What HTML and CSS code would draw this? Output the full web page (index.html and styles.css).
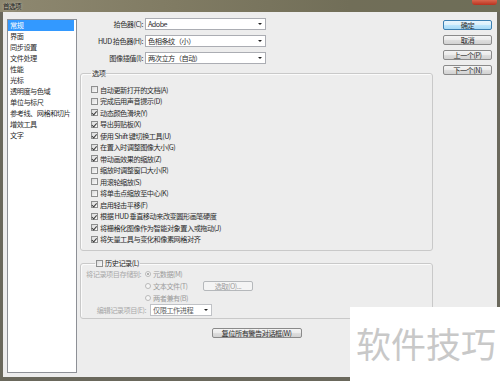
FILE: index.html
```html
<!DOCTYPE html>
<html lang="zh-CN">

<head>
    <meta charset="UTF-8">
    <meta name="viewport" content="width=device-width, initial-scale=1.0">
    <title>首选项</title>
    <link rel="stylesheet" href="styles.css">
</head>

<body>

    <div class="window">
        <div class="titlebar">
            <span class="title">首选项</span>
            <span class="close"></span>
        </div>

        <div class="client">
            <ul class="cats">
                <li class="sel">常规</li>
                <li>界面</li>
                <li>同步设置</li>
                <li>文件处理</li>
                <li>性能</li>
                <li>光标</li>
                <li>透明度与色域</li>
                <li>单位与标尺</li>
                <li>参考线、网格和切片</li>
                <li>增效工具</li>
                <li>文字</li>
            </ul>

            <div class="main">
                <div class="pickers">
                    <div class="pick-row">
                        <label>拾色器(C):</label>
                        <div class="combo">Adobe</div>
                    </div>
                    <div class="pick-row">
                        <label>HUD 拾色器(H):</label>
                        <div class="combo">色相条纹（小）</div>
                    </div>
                    <div class="pick-row">
                        <label>图像插值(I):</label>
                        <div class="combo">两次立方（自动）</div>
                    </div>
                </div>

                <fieldset class="group options">
                    <legend>选项</legend>
                    <div class="chk"><span class="box"></span>自动更新打开的文档(A)</div>
                    <div class="chk"><span class="box"></span>完成后用声音提示(D)</div>
                    <div class="chk on"><span class="box"></span>动态颜色滑块(Y)</div>
                    <div class="chk on"><span class="box"></span>导出剪贴板(X)</div>
                    <div class="chk on"><span class="box"></span>使用 Shift 键切换工具(U)</div>
                    <div class="chk on"><span class="box"></span>在置入时调整图像大小(G)</div>
                    <div class="chk on"><span class="box"></span>带动画效果的缩放(Z)</div>
                    <div class="chk"><span class="box"></span>缩放时调整窗口大小(R)</div>
                    <div class="chk"><span class="box"></span>用滚轮缩放(S)</div>
                    <div class="chk"><span class="box"></span>将单击点缩放至中心(K)</div>
                    <div class="chk on"><span class="box"></span>启用轻击平移(F)</div>
                    <div class="chk on"><span class="box"></span>根据 HUD 垂直移动来改变圆形画笔硬度</div>
                    <div class="chk on"><span class="box"></span>将栅格化图像作为智能对象置入或拖动(J)</div>
                    <div class="chk on"><span class="box"></span>将矢量工具与变化和像素网格对齐</div>
                </fieldset>

                <fieldset class="group history">
                    <legend><span class="box"></span>历史记录(L)</legend>
                    <div class="hrow">
                        <span class="hlabel">将记录项目存储到:</span>
                        <span class="radio on"></span><span class="dim">元数据(M)</span>
                    </div>
                    <div class="hrow indent">
                        <span class="radio-item"><span class="radio"></span><span class="dim">文本文件(T)</span></span>
                        <span class="btn small disabled">选取(O)...</span>
                    </div>
                    <div class="hrow indent">
                        <span class="radio"></span><span class="dim">两者兼有(B)</span>
                    </div>
                    <div class="hrow">
                        <span class="hlabel wide">编辑记录项目(E):</span>
                        <div class="combo short">仅限工作进程</div>
                    </div>
                </fieldset>

                <div class="reset-row">
                    <span class="btn reset">复位所有警告对话框(W)</span>
                </div>
            </div>

            <div class="actions">
                <span class="btn default">确定</span>
                <span class="btn">取消</span>
                <span class="btn">上一个(P)</span>
                <span class="btn">下一个(N)</span>
            </div>
        </div>

        <div class="watermark">软件技巧</div>
    </div>

</body>

</html>
```

FILE: styles.css
```css
body {
    margin: 0;
    width: 500px;
    height: 381px;
    overflow: hidden;
    background-color: #6a685c;
    font-family: "Noto Sans CJK SC", "Noto Sans", sans-serif;
    font-size: 7.2px;
    letter-spacing: -0.5px;
    color: #2b2b2b;
}

.window {
    position: relative;
    height: 381px;
    display: flex;
    flex-direction: column;
}

.titlebar {
    position: relative;
    height: 12px;
    flex: none;
    display: flex;
    align-items: center;
    padding-left: 3px;
    background: linear-gradient(to right, #8e8870, #807b63 35%, #716e58 70%, #6e6e58);
}

.title {
    color: #1c1c1c;
    font-size: 6.5px;
    text-shadow: 0 0 3px rgba(255, 255, 255, 0.6);
}

.close {
    position: absolute;
    top: 0;
    right: 3px;
    width: 25px;
    height: 5px;
    border-radius: 0 0 3px 3px;
    background: linear-gradient(#d9664e, #b8321f);
}

.client {
    flex: 1;
    margin: 0 3px 4px 3px;
    padding: 6px 5px 0 4px;
    background-color: #ededed;
    display: flex;
}

/* category list */

.cats {
    list-style: none;
    margin: 1px 0 0 0;
    padding: 0;
    width: 70px;
    height: 354px;
    box-sizing: border-box;
    border: 1px solid #8d9096;
    background-color: #fff;
}

.cats li {
    height: 11px;
    line-height: 11px;
    padding-left: 2px;
    margin-right: 2px;
}

.cats li.sel {
    background-color: #3399ff;
    color: #fff;
}

/* main column */

.main {
    width: 353px;
    margin-left: 3px;
}

.pickers {
    display: flex;
    flex-direction: column;
    gap: 5px;
}

.pick-row {
    display: flex;
    height: 12px;
    line-height: 12px;
}

.pick-row label {
    width: 63px;
    margin-right: 2px;
    text-align: right;
}

.combo {
    position: relative;
    width: 121px;
    height: 12px;
    box-sizing: border-box;
    border: 1px solid #abadb3;
    background-color: #fff;
    padding-left: 2px;
    line-height: 10px;
}

.combo::after {
    content: "";
    position: absolute;
    right: 3px;
    top: 4px;
    border-left: 2px solid transparent;
    border-right: 2px solid transparent;
    border-top: 2.5px solid #222;
}

.combo.short {
    width: 62px;
    color: #5c5c5c;
    border-color: #c0c2c6;
}

.group {
    margin: 0;
    border: 1px solid #c9c9c9;
    border-radius: 3px;
    box-shadow: inset 1px 1px 0 #fbfbfb;
    min-inline-size: 0;
}

.group legend {
    padding: 0 1px;
    line-height: 10px;
}

.options {
    margin-top: 4px;
    padding: 6px 0 5px 10px;
}

.chk {
    display: flex;
    align-items: center;
    height: 11.5px;
}

.box {
    display: inline-flex;
    align-items: center;
    justify-content: center;
    width: 7px;
    height: 7px;
    box-sizing: border-box;
    margin-right: 2px;
    border: 1px solid #8e8f8f;
    background: linear-gradient(135deg, #dadada, #fbfbfb);
}

.chk.on .box::after {
    content: "";
    width: 1.5px;
    height: 3.5px;
    margin-top: -1px;
    border: solid #3a3a3a;
    border-width: 0 1px 1px 0;
    transform: rotate(40deg);
}

/* history group */

.history {
    margin-top: 7px;
    padding: 0 0 2px 0;
}

.history legend {
    display: flex;
    align-items: center;
    margin-left: 14px;
    color: #1f1f1f;
}

.hrow {
    display: flex;
    align-items: center;
    height: 12px;
}

.hrow.indent {
    padding-left: 64px;
}

.hlabel {
    width: 60px;
    margin-right: 4px;
    text-align: right;
    color: #a8a8a8;
}

.hlabel.wide {
    width: 65px;
}

.dim {
    color: #9c9c9c;
}

.radio-item {
    display: flex;
    align-items: center;
    width: 58px;
}

.radio {
    display: inline-flex;
    align-items: center;
    justify-content: center;
    width: 6px;
    height: 6px;
    box-sizing: border-box;
    margin-right: 2px;
    border: 1px solid #b9b9b9;
    border-radius: 50%;
    background-color: #f6f6f6;
}

.radio.on::after {
    content: "";
    width: 2px;
    height: 2px;
    border-radius: 50%;
    background-color: #9a9a9a;
}

/* buttons */

.btn {
    display: block;
    height: 10px;
    box-sizing: border-box;
    border: 1px solid #8a8a8a;
    border-radius: 2px;
    background: linear-gradient(#f4f4f4, #ebebeb 50%, #dedede 51%, #d2d2d2);
    line-height: 8px;
    text-align: center;
    color: #2b2b2b;
}

.btn.default {
    border-color: #3c7fb1;
    background: linear-gradient(#eaf6fd, #d9f0fc 50%, #bee6fd 51%, #a7d9f5);
}

.btn.small {
    width: 50px;
}

.btn.disabled {
    border-color: #b5b8bb;
    background: #f4f4f4;
    color: #a0a0a0;
}

.reset-row {
    display: flex;
    justify-content: center;
    margin-top: 9px;
}

.btn.reset {
    width: 90px;
}

.actions {
    width: 49px;
    margin-left: 10px;
    margin-top: 2px;
    display: flex;
    flex-direction: column;
    gap: 5px;
}

/* watermark overlay */

.watermark {
    position: absolute;
    left: 350px;
    top: 307px;
    width: 150px;
    height: 74px;
    box-sizing: border-box;
    padding: 18px 0 0 6px;
    background-color: #fff;
    font-size: 35px;
    line-height: 35px;
    letter-spacing: 0;
    color: #c8c8c8;
}
```
